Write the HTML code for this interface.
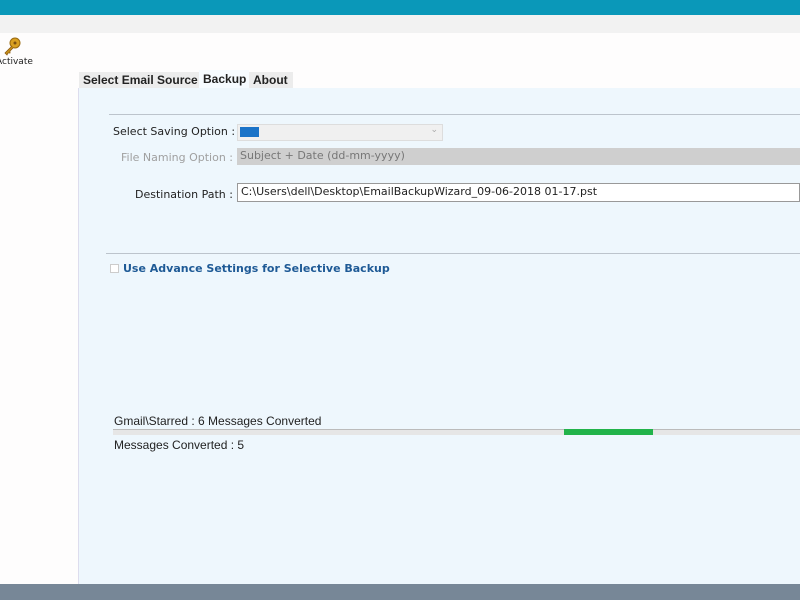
<!DOCTYPE html>
<html><head><style>
*{margin:0;padding:0;box-sizing:border-box}
body{width:800px;height:600px;overflow:hidden;background:#fdfcfc;font-family:"DejaVu Sans","Liberation Sans",sans-serif;font-size:11px;color:#222;position:relative}
.a{position:absolute;white-space:nowrap}
.t{font-family:"Liberation Sans",sans-serif;font-weight:bold;font-size:12px}
</style></head><body>
<div class="a" style="left:0;top:0;width:800px;height:15px;background:#0a98b9"></div>
<div class="a" style="left:0;top:15px;width:800px;height:18px;background:#f2f2f2"></div>
<div class="a" style="left:0;top:33px;width:800px;height:551px;background:#fefdfd"></div>
<svg class="a" style="left:2px;top:36px" width="20" height="20" viewBox="0 0 20 20"><circle cx="13" cy="7" r="5" fill="#d9a020" stroke="#9a6a10"/><circle cx="13" cy="7" r="1.5" fill="#7a5010"/><path d="M10 10 L3 17 L5 19 L6 17 L8 17 L8 15 L11 12" fill="#c8901a" stroke="#8a5a10" stroke-width=".8"/></svg>
<div class="a" style="left:-4px;top:57px;font-size:9px;color:#222">Activate</div>
<div class="a" style="left:78px;top:88px;width:722px;height:496px;background:#eef7fd;border-left:1px solid #dde"></div>
<div class="a t" style="left:79px;top:72px;width:120px;height:16px;background:#ececec;padding:1px 4px">Select Email Source</div>
<div class="a t" style="left:199px;top:70px;width:50px;height:18px;background:#f6fbff;padding:2px 4px">Backup</div>
<div class="a t" style="left:249px;top:72px;width:44px;height:16px;background:#ececec;padding:1px 4px">About</div>
<div class="a" style="left:109px;top:114px;width:691px;height:1px;background:#bcc4cc"></div>
<div class="a" style="left:113px;top:125px">Select Saving Option :</div>
<div class="a" style="left:237px;top:124px;width:206px;height:17px;background:#f0f0f0;border:1px solid #ddd"><div class="a" style="left:2px;top:2px;width:19px;height:10px;background:#1a73c8"></div><div class="a" style="right:4px;top:0;color:#aaa;font-size:9px">⌄</div></div>
<div class="a" style="left:121px;top:151px;color:#a0a0a0">File Naming Option :</div>
<div class="a" style="left:237px;top:148px;width:563px;height:17px;background:#cfcfcf;color:#777;padding:1px 3px">Subject + Date (dd-mm-yyyy)</div>
<div class="a" style="left:135px;top:188px">Destination Path :</div>
<div class="a" style="left:237px;top:183px;width:563px;height:19px;background:#fff;border:1px solid #999;padding:1px 3px">C:\Users\dell\Desktop\EmailBackupWizard_09-06-2018 01-17.pst</div>
<div class="a" style="left:106px;top:253px;width:694px;height:1px;background:#bcc4cc"></div>
<div class="a" style="left:110px;top:264px;width:9px;height:9px;border:1px solid #ccc;background:#fff"></div>
<div class="a" style="left:123px;top:262px;font-weight:bold;color:#1e5a96">Use Advance Settings for Selective Backup</div>
<div class="a" style="left:114px;top:414px;font-family:'Liberation Sans',sans-serif;font-size:12px">Gmail\Starred : 6 Messages Converted</div>
<div class="a" style="left:113px;top:429px;width:687px;height:6px;background:#e6e6e6;border-top:1px solid #bbb"></div>
<div class="a" style="left:564px;top:429px;width:89px;height:6px;background:#22b34a"></div>
<div class="a" style="left:114px;top:438px;font-family:'Liberation Sans',sans-serif;font-size:12px">Messages Converted : 5</div>
<div class="a" style="left:0;top:584px;width:800px;height:16px;background:#778797"></div>
</body></html>
